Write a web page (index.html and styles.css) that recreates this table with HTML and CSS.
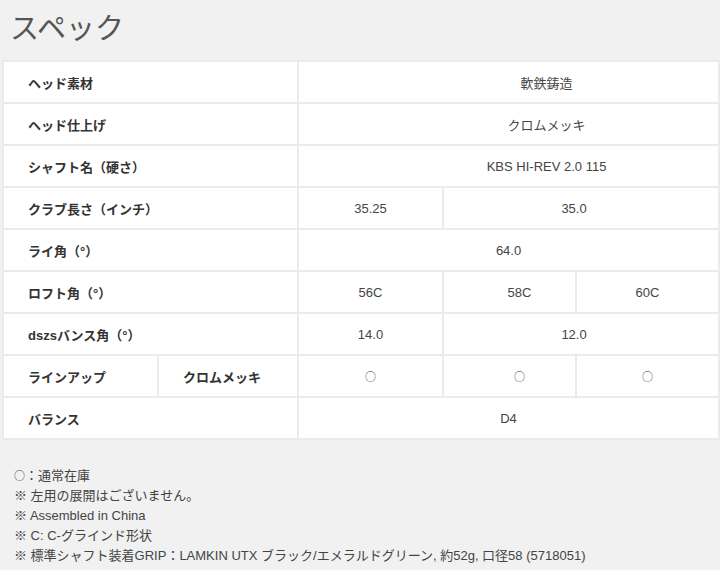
FILE: index.html
```html
<!DOCTYPE html>
<html lang="ja">
<head>
<meta charset="utf-8">
<link rel="stylesheet" href="styles.css">
</head>
<body>
<h2 class="title">スペック</h2>
<table class="spec">
  <colgroup>
    <col class="c1"><col class="c2"><col class="c3"><col class="c4"><col class="c5">
  </colgroup>
  <tr><th colspan="2">ヘッド素材</th><td colspan="3" class="wide">軟鉄鋳造</td></tr>
  <tr><th colspan="2">ヘッド仕上げ</th><td colspan="3" class="wide">クロムメッキ</td></tr>
  <tr><th colspan="2">シャフト名（硬さ）</th><td colspan="3" class="wide">KBS HI-REV 2.0 115</td></tr>
  <tr><th colspan="2">クラブ長さ（インチ）</th><td>35.25</td><td colspan="2" class="pair">35.0</td></tr>
  <tr><th colspan="2">ライ角（°）</th><td colspan="3">64.0</td></tr>
  <tr><th colspan="2">ロフト角（°）</th><td>56C</td><td class="mid">58C</td><td>60C</td></tr>
  <tr><th colspan="2">dszsバンス角（°）</th><td>14.0</td><td colspan="2" class="pair">12.0</td></tr>
  <tr><th>ラインアップ</th><th>クロムメッキ</th><td class="mark">○</td><td class="mark mid">○</td><td class="mark">○</td></tr>
  <tr><th colspan="2">バランス</th><td colspan="3">D4</td></tr>
</table>
<div class="notes">
  <p><span class="circle">○</span>：通常在庫</p>
  <p>※ 左用の展開はございません。</p>
  <p>※ Assembled in China</p>
  <p>※ C: C-グラインド形状</p>
  <p>※ 標準シャフト装着GRIP：LAMKIN UTX ブラック/エメラルドグリーン, 約52g, 口径58 (5718051)</p>
</div>
</body>
</html>
```
FILE: styles.css
```css
html, body {
  margin: 0;
  padding: 0;
  background: #f1f1f1;
}
body {
  font-family: "Liberation Sans", Arial, "Noto Sans CJK JP", sans-serif;
  color: #444;
}
.title {
  margin: 0;
  padding: 11px 0 0 10px;
  height: 52px;
  box-sizing: border-box;
  font-size: 29px;
  font-weight: normal;
  color: #555;
  line-height: 36px;
}
.spec {
  margin: 8px 0 0 2px;
  width: 716px;
  border-collapse: collapse;
  table-layout: fixed;
  font-size: 13px;
}
.c1 { width: 155px; }
.c2 { width: 140px; }
.c3 { width: 145px; }
.c4 { width: 133px; }
.c5 { width: 143px; }
.spec th, .spec td {
  background: #fff;
  border: 2px solid #ebebeb;
  height: 42px;
  padding: 0;
  box-sizing: border-box;
}
.spec th {
  text-align: left;
  padding-left: 24px;
  font-weight: bold;
  color: #333;
}
.spec td {
  text-align: center;
  color: #444;
}
.spec td.wide {
  padding-left: 76px;
}
.spec td.pair {
  padding-right: 14px;
}
.spec td.mid {
  padding-left: 20px;
}
.spec td.mark {
  font-family: "Noto Sans CJK JP", sans-serif;
  font-size: 11px;
}
.notes {
  margin: 25px 0 0 14px;
  font-size: 13px;
  line-height: 20px;
  color: #444;
}
.notes p {
  margin: 0;
}
.circle {
  font-family: "Noto Sans CJK JP", sans-serif;
  font-size: 11px;
}
```
